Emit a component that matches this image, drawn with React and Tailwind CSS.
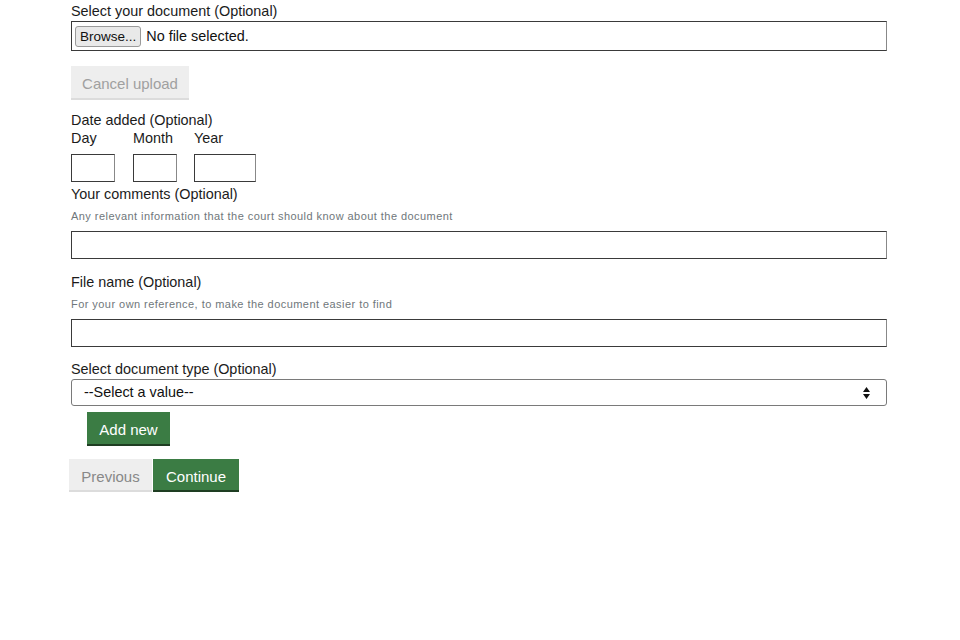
import React from "react";

function Label({ children, className = "" }) {
  return <div className={`text-[14.4px] leading-[18px] text-[#1b1b1b] ${className}`}>{children}</div>;
}

function Hint({ children, className = "" }) {
  return <div className={`text-[11px] leading-[14px] tracking-[0.45px] text-[#6f777b] ${className}`}>{children}</div>;
}

function TextBox({ className = "" }) {
  return <div className={`h-[28px] border border-[#3a3a3a] border-r-[#888] bg-white ${className}`} />;
}

export default function App() {
  return (
    <div className="min-h-[640px] w-[960px] bg-white font-['Liberation_Sans',Arial,sans-serif]">
      <div className="ml-[71px] w-[816px] pt-[2px]">
        <Label>Select your document (Optional)</Label>
        <div className="mt-[1px] flex h-[30px] items-center border border-[#3a3a3a] border-r-[#888] pl-[3px] pt-[1px]">
          <button className="h-[21px] rounded-[3px] border border-[#9a9a9a] bg-[#e9e9e9] px-[4px] text-[13.5px] leading-none text-[#111]">
            Browse...
          </button>
          <span className="ml-[5px] text-[14.4px] text-[#111]">No file selected.</span>
        </div>

        <button className="mt-[15px] h-[34px] w-[118px] border-b-2 border-[#dcdcdc] bg-[#eeeeee] pt-[4px] text-[15px] text-[#a0a0a0]">
          Cancel upload
        </button>

        <Label className="mt-[11px]">Date added (Optional)</Label>
        <div className="flex">
          <div className="w-[62px]">
            <Label>Day</Label>
            <TextBox className="mt-[7px] w-[44px]" />
          </div>
          <div className="w-[61px]">
            <Label>Month</Label>
            <TextBox className="mt-[7px] w-[44px]" />
          </div>
          <div>
            <Label>Year</Label>
            <TextBox className="mt-[7px] w-[62px]" />
          </div>
        </div>

        <Label className="mt-[3px]">Your comments (Optional)</Label>
        <Hint className="mt-[6px]">Any relevant information that the court should know about the document</Hint>
        <TextBox className="mt-[8px] w-full" />

        <Label className="mt-[14px]">File name (Optional)</Label>
        <Hint className="mt-[6px]">For your own reference, to make the document easier to find</Hint>
        <TextBox className="mt-[8px] w-full" />

        <Label className="mt-[13px]">Select document type (Optional)</Label>
        <div className="mt-[1px] flex h-[27px] items-center justify-between rounded-[3px] border border-[#7a7a7a] pl-[12px] pr-[16px]">
          <span className="text-[14.4px] text-[#111]">--Select a value--</span>
          <svg width="7" height="12" viewBox="0 0 7 12">
            <path d="M3.5 0 L7 5 L0 5 Z M0 7 L7 7 L3.5 12 Z" fill="#111" />
          </svg>
        </div>

        <button className="ml-[16px] mt-[6px] h-[34px] w-[83px] border-b-2 border-[#1e3d22] bg-[#3b7c44] pt-[5px] text-[15px] text-white">
          Add new
        </button>

        <div className="-ml-[2px] mt-[13px] flex">
          <button className="h-[33px] w-[83px] border-b-2 border-[#dcdcdc] bg-[#eeeeee] pt-[6px] text-[15px] text-[#888]">
            Previous
          </button>
          <button className="ml-[1px] h-[33px] w-[86px] border-b-2 border-[#1e3d22] bg-[#3b7c44] pt-[6px] text-[15px] text-white">
            Continue
          </button>
        </div>
      </div>
    </div>
  );
}
